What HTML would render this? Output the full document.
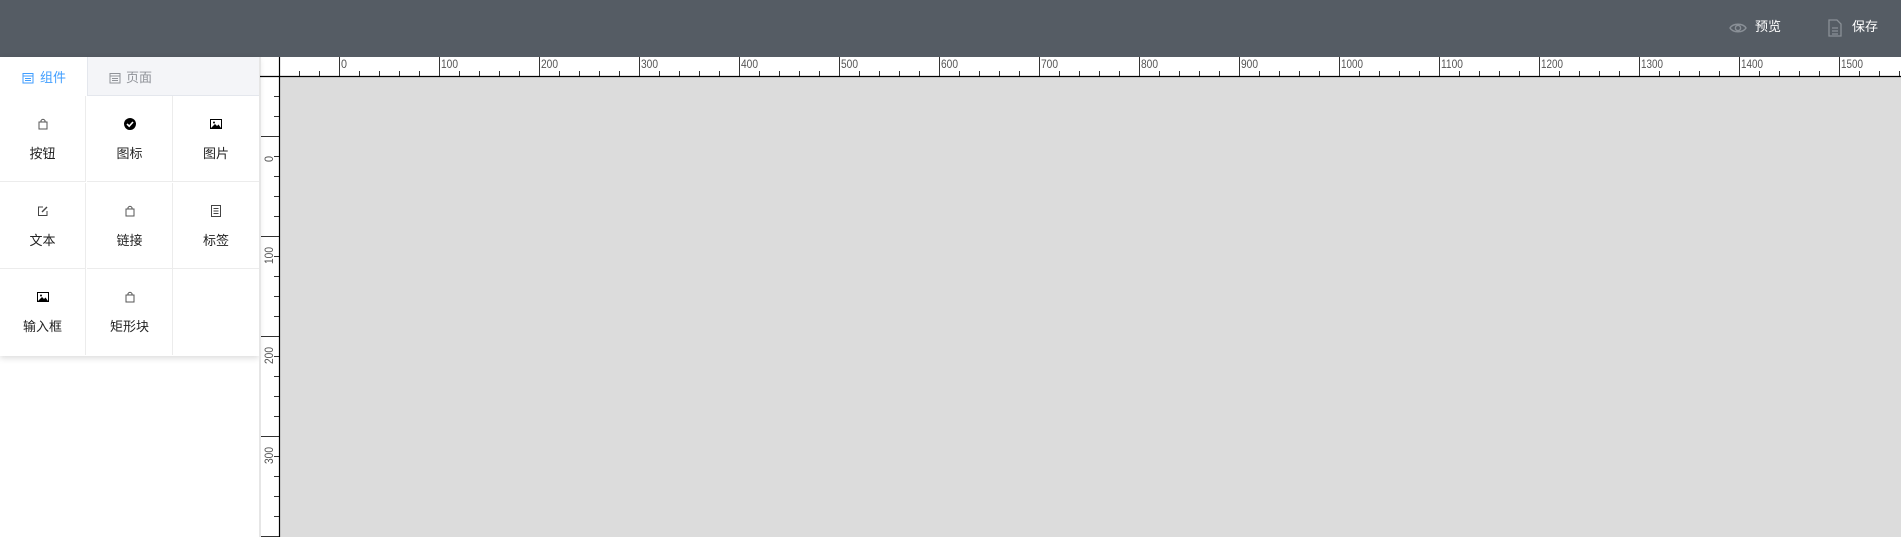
<!DOCTYPE html>
<html><head><meta charset="utf-8"><style>
*{margin:0;padding:0;box-sizing:border-box}
body{width:1901px;height:537px;overflow:hidden;background:#fff;font-family:"Liberation Sans","Noto Sans CJK SC",sans-serif;position:relative}
.hdr{position:absolute;left:0;top:0;width:1901px;height:57px;background:#555c64}
.hb{position:absolute;top:17px;color:#fff;font-size:13px;line-height:20px}
.panel{position:absolute;left:0;top:57px;width:259px;height:299px;background:#fff;box-shadow:0 2px 6px rgba(0,0,0,.15)}
.tab{position:absolute;top:0;height:39px;width:87px;font-size:13px;line-height:41px}
.cell{position:absolute;width:86px;height:86px;border-right:1px solid #ececec;border-bottom:1px solid #ececec;text-align:center}
.cell svg{position:absolute;left:37px;top:22px}
.cell span{position:absolute;left:0;right:0;top:48px;font-size:13px;line-height:20px;color:#222}
</style></head><body>
<div class="hdr">
<svg style="position:absolute;left:1729px;top:21px" width="18" height="14" viewBox="0 0 18 14"><path d="M1 7C4 2 14 2 17 7C14 12 4 12 1 7Z" fill="none" stroke="#8a9097" stroke-width="1.4"/><circle cx="9" cy="7" r="2.6" fill="none" stroke="#8a9097" stroke-width="1.4"/></svg>
<div class="hb" style="left:1755px">预览</div>
<svg style="position:absolute;left:1828px;top:19px" width="14" height="18" viewBox="0 0 14 18"><path d="M1 1H9L13 5V17H1Z" fill="none" stroke="#8a9097" stroke-width="1.3"/><path d="M4 9H10M4 12H10M4 15H10" stroke="#8a9097" stroke-width="1.2"/></svg>
<div class="hb" style="left:1852px">保存</div>
</div>
<div class="panel">
<div class="tab" style="left:0;color:#409eff"><svg style="position:absolute;left:22px;top:15px" width="12" height="12" viewBox="0 0 12 12"><rect x="1" y="1.5" width="10" height="9.5" fill="none" stroke="#409eff"/><path d="M1 4H11M3 6.5H9M3 8.5H9" stroke="#409eff"/></svg><span style="position:absolute;left:40px">组件</span></div>
<div class="tab" style="left:87px;width:172px;background:#f4f5f8;border-left:1px solid #e4e7ed;border-bottom:1px solid #e4e7ed;color:#909399"><svg style="position:absolute;left:21px;top:15px" width="12" height="12" viewBox="0 0 12 12"><rect x="1" y="1.5" width="10" height="9.5" fill="none" stroke="#909399"/><path d="M1 4H11M3 6.5H9M3 8.5H9" stroke="#909399"/></svg><span style="position:absolute;left:38px">页面</span></div>
<div class="cell" style="left:0;top:39px"><svg width="12" height="12" viewBox="0 0 12 12"><path d="M2 4H10V11H2Z M4 4V2.5Q6 0 8 2.5V4" fill="none" stroke="#555" stroke-width="1"/></svg><span>按钮</span></div>
<div class="cell" style="left:87px;top:39px"><svg width="12" height="12" viewBox="0 0 12 12"><circle cx="6" cy="6" r="6" fill="#000"/><path d="M3 6L5.2 8.2L9 4" fill="none" stroke="#fff" stroke-width="1.6"/></svg><span>图标</span></div>
<div class="cell" style="left:173px;top:39px;border-right:none"><svg width="12" height="12" viewBox="0 0 12 12"><rect x="0.5" y="1.5" width="11" height="9" fill="none" stroke="#000"/><path d="M1 10L5 6L7 8L8.5 6.5L11 10Z" fill="#000"/><circle cx="4" cy="4.5" r="1" fill="#000"/></svg><span>图片</span></div>
<div class="cell" style="left:0;top:126px"><svg width="12" height="12" viewBox="0 0 12 12"><path d="M6 2H1.5V10.5H10V6" fill="none" stroke="#444"/><path d="M5 7L10 2" stroke="#444" stroke-width="1.4"/></svg><span>文本</span></div>
<div class="cell" style="left:87px;top:126px"><svg width="12" height="12" viewBox="0 0 12 12"><path d="M2 4H10V11H2Z M4 4V2.5Q6 0 8 2.5V4" fill="none" stroke="#555"/></svg><span>链接</span></div>
<div class="cell" style="left:173px;top:126px;border-right:none"><svg width="12" height="12" viewBox="0 0 12 12"><rect x="1.5" y="0.5" width="9" height="11" fill="none" stroke="#444"/><path d="M3.5 3.5H8.5M3.5 6H8.5M3.5 8.5H8.5" stroke="#444"/></svg><span>标签</span></div>
<div class="cell" style="left:0;top:212px;border-bottom:none"><svg width="12" height="12" viewBox="0 0 12 12"><rect x="0.5" y="1.5" width="11" height="9" fill="none" stroke="#000"/><path d="M1 10L5 6L7 8L8.5 6.5L11 10Z" fill="#000"/><circle cx="4" cy="4.5" r="1" fill="#000"/></svg><span>输入框</span></div>
<div class="cell" style="left:87px;top:212px;border-bottom:none"><svg width="12" height="12" viewBox="0 0 12 12"><path d="M2 4H10V11H2Z M4 4V2.5Q6 0 8 2.5V4" fill="none" stroke="#555"/></svg><span>矩形块</span></div>
</div>
<div style="position:absolute;left:259px;top:57px;width:2px;height:480px;background:#e6e6e6"></div>
<svg style="position:absolute;left:0;top:0" width="1901" height="537">
<defs>
<pattern id="hm" patternUnits="userSpaceOnUse" x="279" y="0" width="20" height="537"><line x1="0.5" y1="71" x2="0.5" y2="76" stroke="#333"/></pattern>
<pattern id="hM" patternUnits="userSpaceOnUse" x="339" y="0" width="100" height="537"><line x1="0.5" y1="57" x2="0.5" y2="76" stroke="#333"/></pattern>
<pattern id="vm" patternUnits="userSpaceOnUse" x="0" y="76" width="1901" height="20"><line x1="274" y1="0.5" x2="279" y2="0.5" stroke="#333"/></pattern>
<pattern id="vM" patternUnits="userSpaceOnUse" x="0" y="136" width="1901" height="100"><line x1="261" y1="0.5" x2="279" y2="0.5" stroke="#333"/></pattern>
</defs>
<rect x="280" y="77" width="1621" height="460" fill="#dcdcdc"/>
<rect x="280" y="57" width="1621" height="19" fill="url(#hm)"/>
<rect x="280" y="57" width="1621" height="19" fill="url(#hM)"/>
<rect x="261" y="77" width="18" height="460" fill="url(#vm)"/>
<rect x="261" y="77" width="18" height="460" fill="url(#vM)"/>
<line x1="260" y1="76.5" x2="1901" y2="76.5" stroke="#000" stroke-width="1.2"/>
<line x1="279.5" y1="57" x2="279.5" y2="537" stroke="#000" stroke-width="1.2"/>
<g font-family="Liberation Sans, sans-serif" font-size="12" fill="#555" lengthAdjust="spacingAndGlyphs">
<text x="341" y="68" textLength="6" lengthAdjust="spacingAndGlyphs">0</text>
<text x="441" y="68" textLength="17" lengthAdjust="spacingAndGlyphs">100</text>
<text x="541" y="68" textLength="17" lengthAdjust="spacingAndGlyphs">200</text>
<text x="641" y="68" textLength="17" lengthAdjust="spacingAndGlyphs">300</text>
<text x="741" y="68" textLength="17" lengthAdjust="spacingAndGlyphs">400</text>
<text x="841" y="68" textLength="17" lengthAdjust="spacingAndGlyphs">500</text>
<text x="941" y="68" textLength="17" lengthAdjust="spacingAndGlyphs">600</text>
<text x="1041" y="68" textLength="17" lengthAdjust="spacingAndGlyphs">700</text>
<text x="1141" y="68" textLength="17" lengthAdjust="spacingAndGlyphs">800</text>
<text x="1241" y="68" textLength="17" lengthAdjust="spacingAndGlyphs">900</text>
<text x="1341" y="68" textLength="22" lengthAdjust="spacingAndGlyphs">1000</text>
<text x="1441" y="68" textLength="22" lengthAdjust="spacingAndGlyphs">1100</text>
<text x="1541" y="68" textLength="22" lengthAdjust="spacingAndGlyphs">1200</text>
<text x="1641" y="68" textLength="22" lengthAdjust="spacingAndGlyphs">1300</text>
<text x="1741" y="68" textLength="22" lengthAdjust="spacingAndGlyphs">1400</text>
<text x="1841" y="68" textLength="22" lengthAdjust="spacingAndGlyphs">1500</text>
<text transform="translate(273,162) rotate(-90)" textLength="6" lengthAdjust="spacingAndGlyphs">0</text>
<text transform="translate(273,264) rotate(-90)" textLength="17" lengthAdjust="spacingAndGlyphs">100</text>
<text transform="translate(273,364) rotate(-90)" textLength="17" lengthAdjust="spacingAndGlyphs">200</text>
<text transform="translate(273,464) rotate(-90)" textLength="17" lengthAdjust="spacingAndGlyphs">300</text>
</g>
</svg>
</body></html>
